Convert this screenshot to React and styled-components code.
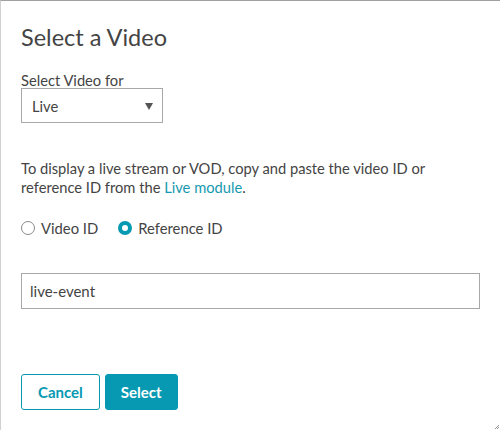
import React, { useState } from "react";
import styled, { createGlobalStyle } from "styled-components";

const GlobalStyle = createGlobalStyle`
  html, body {
    margin: 0;
    padding: 0;
    background: #fff;
  }
  body {
    font-family: Lato, "Open Sans", sans-serif;
    color: #444;
  }
`;

const Dialog = styled.div`
  box-sizing: border-box;
  width: 500px;
  height: 430px;
  border-top: 1px solid #a0a0a0;
  border-left: 1px solid #d2d2d2;
  padding: 22px 20px 20px 20px;
  display: flex;
  flex-direction: column;
  align-items: flex-start;
  position: relative;
`;

const Title = styled.h1`
  margin: 0;
  font-size: 23.5px;
  font-weight: 400;
  line-height: 28px;
  color: #444;
`;

const Label = styled.label`
  display: block;
  margin-top: 21px;
  font-size: 14.7px;
  line-height: 16px;
  color: #444;
`;

const SelectBox = styled.div`
  box-sizing: border-box;
  width: 142px;
  height: 35px;
  border: 1px solid #a8a8a8;
  display: flex;
  align-items: center;
  justify-content: space-between;
  padding: 0 9px 0 10px;
  font-size: 14.7px;
  color: #444;
`;

const Caret = styled.span`
  width: 0;
  height: 0;
  margin-top: 1px;
  border-left: 4px solid transparent;
  border-right: 4px solid transparent;
  border-top: 7px solid #555;
`;

const Help = styled.p`
  margin: 36px 0 0;
  font-size: 14.7px;
  line-height: 19px;
  color: #444;
`;

const Link = styled.a`
  color: #1699b0;
  text-decoration: none;
`;

const RadioRow = styled.div`
  display: flex;
  align-items: center;
  gap: 20px;
  margin-top: 22px;
`;

const RadioOption = styled.label`
  display: flex;
  align-items: center;
  gap: 6px;
  font-size: 14.8px;
  line-height: 18px;
  color: #444;
  cursor: pointer;
`;

const RadioDot = styled.span`
  box-sizing: border-box;
  width: 14px;
  height: 14px;
  border-radius: 50%;
  border: ${(p) => (p.checked ? "4.5px solid #0799b2" : "1px solid #8a8a8a")};
  background: #fff;
`;

const TextInput = styled.input`
  box-sizing: border-box;
  margin: 36px 0 0;
  width: 459px;
  height: 36px;
  border: 1px solid #a8a8a8;
  padding: 0 8px;
  font-family: Lato, sans-serif;
  font-size: 15px;
  color: #444;
  outline: none;
`;

const Actions = styled.div`
  display: flex;
  gap: 5px;
  margin-top: 65px;
`;

const Button = styled.button`
  box-sizing: border-box;
  height: 36px;
  margin: 0;
  padding: 0 ${(p) => (p.primary ? "15px" : "16px")};
  border-radius: 3px;
  border: 1px solid #0799b2;
  background: ${(p) => (p.primary ? "#0799b2" : "#fff")};
  color: ${(p) => (p.primary ? "#fff" : "#0799b2")};
  font-family: Lato, sans-serif;
  font-weight: 700;
  font-size: 15px;
  cursor: pointer;
`;

const Grip = styled.svg`
  position: absolute;
  right: 1px;
  bottom: 1px;
`;

export default function App() {
  const [mode, setMode] = useState("ref");
  return (
    <>
      <GlobalStyle />
      <Dialog>
        <Title>Select a Video</Title>
        <Label>Select Video for</Label>
        <SelectBox>
          <span>Live</span>
          <Caret />
        </SelectBox>
        <Help>
          To display a live stream or VOD, copy and paste the video ID or
          <br />
          reference ID from the <Link href="#">Live module</Link>.
        </Help>
        <RadioRow>
          <RadioOption onClick={() => setMode("video")}>
            <RadioDot checked={mode === "video"} />
            Video ID
          </RadioOption>
          <RadioOption onClick={() => setMode("ref")}>
            <RadioDot checked={mode === "ref"} />
            Reference ID
          </RadioOption>
        </RadioRow>
        <TextInput defaultValue="live-event" />
        <Actions>
          <Button>Cancel</Button>
          <Button primary>Select</Button>
        </Actions>
        <Grip width="4" height="4" viewBox="0 0 4 4">
          <path d="M4 0 L0 4 M4 2 L2 4" stroke="#999" strokeWidth="1" />
        </Grip>
      </Dialog>
    </>
  );
}
